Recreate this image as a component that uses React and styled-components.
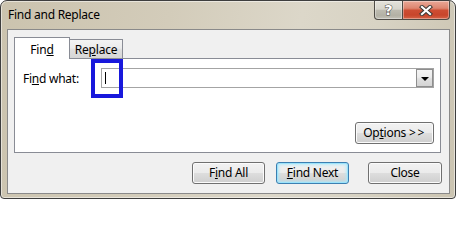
import React from 'react';
import styled, { createGlobalStyle } from 'styled-components';

const Global = createGlobalStyle`
  html, body { margin: 0; padding: 0; background: #ffffff; }
  body { font-family: "Noto Sans", "Open Sans", sans-serif; font-size: 12px; color: #000; }
  * { box-sizing: border-box; }
`;

const Window = styled.div`
  width: 456px;
  height: 199px;
  border: 1px solid #3e3e3e;
  border-radius: 7px 7px 4px 4px;
  background: linear-gradient(100deg, #cbc3ae 0%, #d3ccba 35%, #dcd7c9 62%, #d8d3c4 78%, #cbc4b1 100%);
  box-shadow: inset 0 0 0 1px rgba(255, 255, 255, 0.5);
  display: flex;
  flex-direction: column;
  overflow: hidden;
`;

const TitleBar = styled.div`
  height: 28px;
  display: flex;
  align-items: flex-start;
  padding: 0 5px 0 7px;
`;

const Title = styled.div`
  flex: 1;
  height: 28px;
  line-height: 28px;
  font-size: 12px;
  letter-spacing: -0.25px;
  color: #000;
`;

const CaptionButtons = styled.div`
  display: flex;
  margin-top: -1px;
`;

const CaptionButton = styled.div`
  width: ${(p) => p.$w}px;
  height: 20px;
  border: 1px solid #4e4b45;
  border-top-color: #3e3e3e;
  border-radius: ${(p) => (p.$close ? '0 0 4px 0' : '0 0 0 4px')};
  margin-left: ${(p) => (p.$close ? '-1px' : '0')};
  background: ${(p) =>
    p.$close
      ? 'linear-gradient(#e9a897 0%, #dd8670 40%, #cd4d33 52%, #c8452b 78%, #d56447 100%)'
      : 'linear-gradient(#e4e2da 0%, #d7d5cc 45%, #bdbbb0 52%, #b3b1a5 80%, #c3c1b7 100%)'};
  box-shadow: inset 0 0 0 1px rgba(255, 255, 255, 0.35);
  display: flex;
  align-items: center;
  justify-content: center;
`;

const HelpGlyph = styled.span`
  font-family: "DejaVu Sans", sans-serif;
  font-weight: bold;
  font-size: 14px;
  line-height: 14px;
  color: #ffffff;
  -webkit-text-stroke: 1px #45443f;
  paint-order: stroke fill;
  margin-top: -1px;
`;

const Client = styled.div`
  width: 443px;
  height: 165px;
  margin-left: 6px;
  border: 1px solid #8a8a8a;
  background: #f0f0f0;
  padding: 7px 8px 0 6px;
  display: flex;
  flex-direction: column;
`;

const TabStrip = styled.div`
  height: 21px;
  display: flex;
  align-items: flex-end;
`;

const Tab = styled.div`
  position: relative;
  z-index: ${(p) => (p.$active ? 2 : 1)};
  width: ${(p) => (p.$active ? 56 : 54)}px;
  height: ${(p) => (p.$active ? 22 : 19)}px;
  margin-bottom: ${(p) => (p.$active ? '-1px' : '0')};
  margin-left: ${(p) => (p.$active ? '0' : '-1px')};
  border: 1px solid #898c95;
  border-bottom: none;
  background: ${(p) =>
    p.$active ? '#ffffff' : 'linear-gradient(#f3f3f3 0%, #ebebeb 45%, #dedede 55%, #d6d6d6 100%)'};
  display: flex;
  justify-content: center;
  padding-top: ${(p) => (p.$active ? 4 : 2)}px;
  font-size: 12px;
  line-height: 16px;
  letter-spacing: -0.2px;
`;

const Panel = styled.div`
  position: relative;
  width: 427px;
  height: 95px;
  border: 1px solid #898c95;
  background: #ffffff;
  padding: 9px 6px 0 8px;
  display: flex;
  flex-direction: column;
`;

const FieldRow = styled.div`
  display: flex;
  align-items: center;
`;

const Label = styled.div`
  width: 78px;
  font-size: 12px;
  letter-spacing: -0.25px;
  padding-top: 1px;
`;

const Combo = styled.div`
  flex: 1;
  height: 20px;
  border: 1px solid #a4a4a4;
  background: #ffffff;
  display: flex;
  align-items: center;
  justify-content: space-between;
  padding-left: 3px;
`;

const Caret = styled.div`
  width: 1px;
  height: 12px;
  background: #000;
`;

const DropButton = styled.div`
  width: 17px;
  height: 18px;
  border: 1px solid #8e8e8e;
  background: linear-gradient(#f4f4f4 0%, #ececec 45%, #dfdfdf 55%, #d4d4d4 100%);
  display: flex;
  align-items: center;
  justify-content: center;
`;

const Arrow = styled.div`
  width: 0;
  height: 0;
  border-left: 4px solid transparent;
  border-right: 4px solid transparent;
  border-top: 4px solid #000;
  margin-top: 1px;
`;

const OptionsRow = styled.div`
  display: flex;
  justify-content: flex-end;
  margin-top: 34px;
`;

const Chevrons = styled.span`
  letter-spacing: 1.5px;
  margin-left: 3px;
`;

const Button = styled.div`
  width: ${(p) => p.$w || 73}px;
  height: 22px;
  margin-left: ${(p) => p.$gap || 0}px;
  border: 1px solid ${(p) => (p.$default ? '#3c7fb1' : '#707070')};
  border-radius: 3px;
  background: linear-gradient(#f2f2f2 0%, #ebebeb 48%, #dddddd 52%, #cfcfcf 100%);
  box-shadow: ${(p) =>
    p.$default
      ? 'inset 0 0 0 1px #9be3fb, inset 0 0 3px 2px rgba(170, 232, 252, 0.8)'
      : 'inset 0 0 0 1px #fbfbfb'};
  display: flex;
  align-items: center;
  justify-content: center;
  font-size: 12px;
  letter-spacing: -0.25px;
  line-height: 16px;
  padding-bottom: 1px;
`;

const ButtonRow = styled.div`
  display: flex;
  justify-content: flex-end;
  margin-top: 9px;
  margin-right: -1px;
`;

const Highlight = styled.div`
  position: absolute;
  left: 76px;
  top: 0;
  width: 32px;
  height: 39px;
  border: 4px solid #1818dc;
  pointer-events: none;
`;

const CloseIcon = () => (
  <svg width="14" height="11" viewBox="0 0 14 11">
    <path d="M3 2 L11 9 M11 2 L3 9" stroke="#3d3a36" strokeWidth="4.2" strokeLinecap="square" />
    <path d="M3 2 L11 9 M11 2 L3 9" stroke="#ffffff" strokeWidth="2.2" strokeLinecap="square" />
  </svg>
);

export default function App() {
  return (
    <>
      <Global />
      <Window>
        <TitleBar>
          <Title>Find and Replace</Title>
          <CaptionButtons>
            <CaptionButton $w={29}>
              <HelpGlyph>?</HelpGlyph>
            </CaptionButton>
            <CaptionButton $w={48} $close>
              <CloseIcon />
            </CaptionButton>
          </CaptionButtons>
        </TitleBar>
        <Client>
          <TabStrip>
            <Tab $active>
              <span>
                Fin<u>d</u>
              </span>
            </Tab>
            <Tab>
              <span>
                Re<u>p</u>lace
              </span>
            </Tab>
          </TabStrip>
          <Panel>
            <FieldRow>
              <Label>
                Fi<u>n</u>d what:
              </Label>
              <Combo>
                <Caret />
                <DropButton>
                  <Arrow />
                </DropButton>
              </Combo>
            </FieldRow>
            <OptionsRow>
              <Button $w={79}>
                <span>
                  Op<u>t</u>ions<Chevrons>&gt;&gt;</Chevrons>
                </span>
              </Button>
            </OptionsRow>
            <Highlight />
          </Panel>
          <ButtonRow>
            <Button>
              <span>
                F<u>i</u>nd All
              </span>
            </Button>
            <Button $default $gap={11}>
              <span>
                <u>F</u>ind Next
              </span>
            </Button>
            <Button $w={74} $gap={19}>
              Close
            </Button>
          </ButtonRow>
        </Client>
      </Window>
    </>
  );
}
